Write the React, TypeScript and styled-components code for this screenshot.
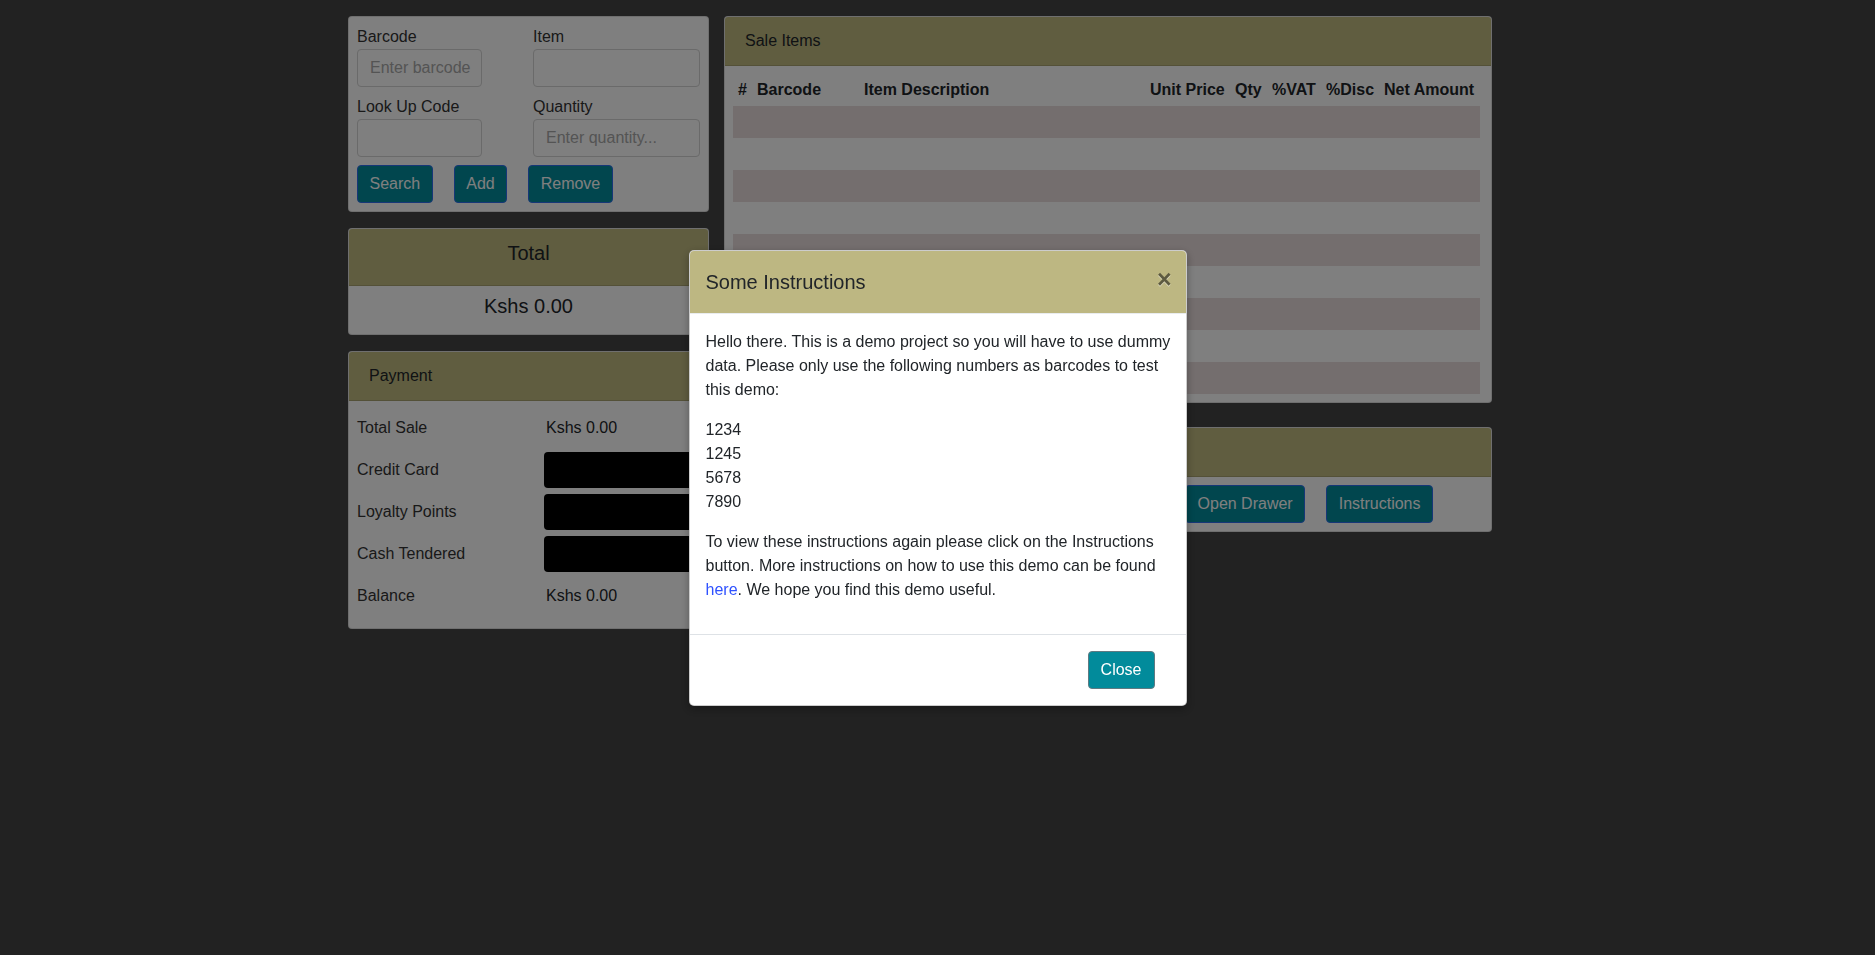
import React from "react";
import styled, { createGlobalStyle } from "styled-components";

const GlobalStyle = createGlobalStyle`
  * { box-sizing: border-box; }
  html, body { margin: 0; padding: 0; }
  body {
    background: #444444;
    font-family: "Liberation Sans", Arial, Helvetica, sans-serif;
    font-size: 16px;
    line-height: 24px;
    color: #212529;
  }
`;

const Page = styled.div`
  display: flex;
  align-items: flex-start;
  gap: 15px;
  padding: 16px 0 0 348px;
  min-height: 955px;
`;

const Column = styled.div<{ $width: number; $gap: number }>`
  display: flex;
  flex-direction: column;
  width: ${(p) => p.$width}px;
  gap: ${(p) => p.$gap}px;
`;

const Card = styled.section`
  background: #ffffff;
  border: 1px solid rgba(0, 0, 0, 0.125);
  border-radius: 4px;
  overflow: hidden;
`;

const CardHeader = styled.header`
  background: #c0ba81;
  border-bottom: 1px solid rgba(0, 0, 0, 0.125);
  padding: 12px 20px;
  min-height: 49px;
  color: #212529;
  font-size: 16px;
  line-height: 24px;
`;

const TotalHeader = styled.header`
  background: #c0ba81;
  border-bottom: 1px solid rgba(0, 0, 0, 0.125);
  padding: 12px 20px 20px;
  text-align: center;
  font-size: 20px;
  line-height: 24px;
  color: #212529;
`;

const TotalBody = styled.div`
  padding: 8px 20px 16px;
  text-align: center;
  font-size: 20px;
  line-height: 24px;
  color: #212529;
`;

const CardBody = styled.div<{ $pad?: string }>`
  padding: ${(p) => p.$pad ?? "8px"};
`;

const FormGrid = styled.div`
  display: grid;
  grid-template-columns: 176px 1fr;
`;

const Field = styled.div`
  display: flex;
  flex-direction: column;
  margin-bottom: 8px;
`;

const Label = styled.label`
  color: #333;
  font-size: 16px;
  line-height: 24px;
`;

const TextInput = styled.input<{ $width?: number }>`
  width: ${(p) => (p.$width ? `${p.$width}px` : "100%")};
  height: 38px;
  padding: 6px 2px 6px 12px;
  border: 1px solid #d4d4d4;
  border-radius: 4px;
  background: #fff;
  font-family: inherit;
  font-size: 16px;
  color: #495057;
  &::placeholder {
    color: #a8a8a8;
  }
`;

const ButtonRow = styled.div<{ $end?: boolean; $padRight?: number }>`
  display: flex;
  gap: 21px;
  justify-content: ${(p) => (p.$end ? "flex-end" : "flex-start")};
  padding-right: ${(p) => p.$padRight ?? 0}px;
`;

const Button = styled.button`
  height: 38px;
  padding: 6px 11.5px;
  border: 1px solid #2c6fee;
  border-radius: 4px;
  background: #028d9d;
  color: #ffffff;
  font-family: inherit;
  font-size: 16px;
  line-height: 24px;
  white-space: nowrap;
  cursor: pointer;
`;

const PayGrid = styled.div`
  display: grid;
  grid-template-columns: 187px 1fr;
  grid-auto-rows: 36px;
  row-gap: 6px;
  align-items: center;
`;

const PayValue = styled.span`
  padding-left: 2px;
`;

const DarkInput = styled.input`
  width: 100%;
  height: 36px;
  border: none;
  border-radius: 4px;
  background: #000;
  color: #fff;
  padding: 6px 12px;
  font-family: inherit;
  font-size: 16px;
`;

const Table = styled.table`
  width: 100%;
  table-layout: fixed;
  border-collapse: collapse;
`;

const Th = styled.th`
  padding: 4px 5px;
  text-align: left;
  font-weight: 700;
  font-size: 16px;
  line-height: 24px;
  white-space: nowrap;
  color: #212529;
`;

const Tr = styled.tr<{ $striped: boolean }>`
  background: ${(p) => (p.$striped ? "#e8dcdc" : "transparent")};
`;

const Td = styled.td`
  height: 32px;
  padding: 4px 5px;
`;

const Backdrop = styled.div`
  position: fixed;
  inset: 0;
  background: rgba(0, 0, 0, 0.5);
  display: flex;
  align-items: center;
  justify-content: center;
`;

const Modal = styled.div`
  width: 498px;
  background: #ffffff;
  border: 1px solid rgba(0, 0, 0, 0.2);
  border-radius: 5px;
  overflow: hidden;
  box-shadow: 0 3px 9px rgba(0, 0, 0, 0.3);
`;

const ModalHeader = styled.div`
  display: flex;
  align-items: flex-start;
  justify-content: space-between;
  padding: 16px;
  background: #bdb782;
  border-bottom: 1px solid #e9ecef;
`;

const ModalTitle = styled.h5`
  margin: 0;
  font-size: 20px;
  font-weight: 400;
  line-height: 30px;
  color: #212529;
`;

const CloseX = styled.button`
  background: transparent;
  border: none;
  padding: 0;
  margin: 0 -2px 0 0;
  font-family: inherit;
  font-size: 25px;
  font-weight: 700;
  line-height: 24px;
  color: #000;
  opacity: 0.5;
  text-shadow: 0 1px 0 #fff;
  cursor: pointer;
`;

const ModalBody = styled.div`
  padding: 16px 8px 16px 16px;
  font-size: 16px;
  line-height: 24px;
  color: #212529;
  p {
    margin: 0 0 16px;
  }
`;

const Link = styled.a`
  color: #2f52ff;
  text-decoration: none;
`;

const ModalFooter = styled.div`
  display: flex;
  justify-content: flex-end;
  padding: 16px 31px 16px 16px;
  border-top: 1px solid #dee2e6;
`;

const CloseButton = styled.button`
  height: 38px;
  padding: 6px 12px;
  border: 1px solid #5f7a82;
  border-radius: 4px;
  background: #028b9b;
  color: #fff;
  font-family: inherit;
  font-size: 16px;
  line-height: 24px;
  cursor: pointer;
`;

const columns = [
  { label: "#", w: 19 },
  { label: "Barcode", w: 107 },
  { label: "Item Description", w: 286 },
  { label: "Unit Price", w: 85 },
  { label: "Qty", w: 37 },
  { label: "%VAT", w: 54 },
  { label: "%Disc", w: 58 },
  { label: "Net Amount", w: 0 },
];

export default function App() {
  return (
    <>
      <GlobalStyle />
      <Page>
        <Column $width={361} $gap={16}>
          <Card>
            <CardBody>
              <FormGrid>
                <Field>
                  <Label>Barcode</Label>
                  <TextInput $width={125} placeholder="Enter barcode" />
                </Field>
                <Field>
                  <Label>Item</Label>
                  <TextInput />
                </Field>
                <Field>
                  <Label>Look Up Code</Label>
                  <TextInput $width={125} />
                </Field>
                <Field>
                  <Label>Quantity</Label>
                  <TextInput placeholder="Enter quantity..." />
                </Field>
              </FormGrid>
              <ButtonRow>
                <Button>Search</Button>
                <Button>Add</Button>
                <Button>Remove</Button>
              </ButtonRow>
            </CardBody>
          </Card>

          <Card>
            <TotalHeader>Total</TotalHeader>
            <TotalBody>Kshs 0.00</TotalBody>
          </Card>

          <Card>
            <CardHeader>Payment</CardHeader>
            <CardBody $pad="9px 8px 14px">
              <PayGrid>
                <Label>Total Sale</Label>
                <PayValue>Kshs 0.00</PayValue>
                <Label>Credit Card</Label>
                <DarkInput />
                <Label>Loyalty Points</Label>
                <DarkInput />
                <Label>Cash Tendered</Label>
                <DarkInput />
                <Label>Balance</Label>
                <PayValue>Kshs 0.00</PayValue>
              </PayGrid>
            </CardBody>
          </Card>
        </Column>

        <Column $width={768} $gap={24}>
          <Card>
            <CardHeader>Sale Items</CardHeader>
            <CardBody $pad="8px 11px 8px 8px">
              <Table>
                <colgroup>
                  {columns.map((c) => (
                    <col key={c.label} style={c.w ? { width: c.w } : undefined} />
                  ))}
                </colgroup>
                <thead>
                  <tr>
                    {columns.map((c) => (
                      <Th key={c.label}>{c.label}</Th>
                    ))}
                  </tr>
                </thead>
                <tbody>
                  {Array.from({ length: 9 }).map((_, i) => (
                    <Tr key={i} $striped={i % 2 === 0}>
                      {columns.map((c) => (
                        <Td key={c.label} />
                      ))}
                    </Tr>
                  ))}
                </tbody>
              </Table>
            </CardBody>
          </Card>

          <Card>
            <CardHeader />
            <CardBody>
              <ButtonRow $end $padRight={50}>
                <Button>Complete Sale</Button>
                <Button>Cancel Sale</Button>
                <Button>Print Receipt</Button>
                <Button>Open Drawer</Button>
                <Button>Instructions</Button>
              </ButtonRow>
            </CardBody>
          </Card>
        </Column>
      </Page>

      <Backdrop>
        <Modal role="dialog">
          <ModalHeader>
            <ModalTitle>Some Instructions</ModalTitle>
            <CloseX aria-label="Close">×</CloseX>
          </ModalHeader>
          <ModalBody>
            <p>
              Hello there. This is a demo project so you will have to use dummy
              data. Please only use the following numbers as barcodes to test
              this demo:
            </p>
            <p>
              1234
              <br />
              1245
              <br />
              5678
              <br />
              7890
            </p>
            <p>
              To view these instructions again please click on the Instructions
              button. More instructions on how to use this demo can be found{" "}
              <Link href="#">here</Link>. We hope you find this demo useful.
            </p>
          </ModalBody>
          <ModalFooter>
            <CloseButton>Close</CloseButton>
          </ModalFooter>
        </Modal>
      </Backdrop>
    </>
  );
}
